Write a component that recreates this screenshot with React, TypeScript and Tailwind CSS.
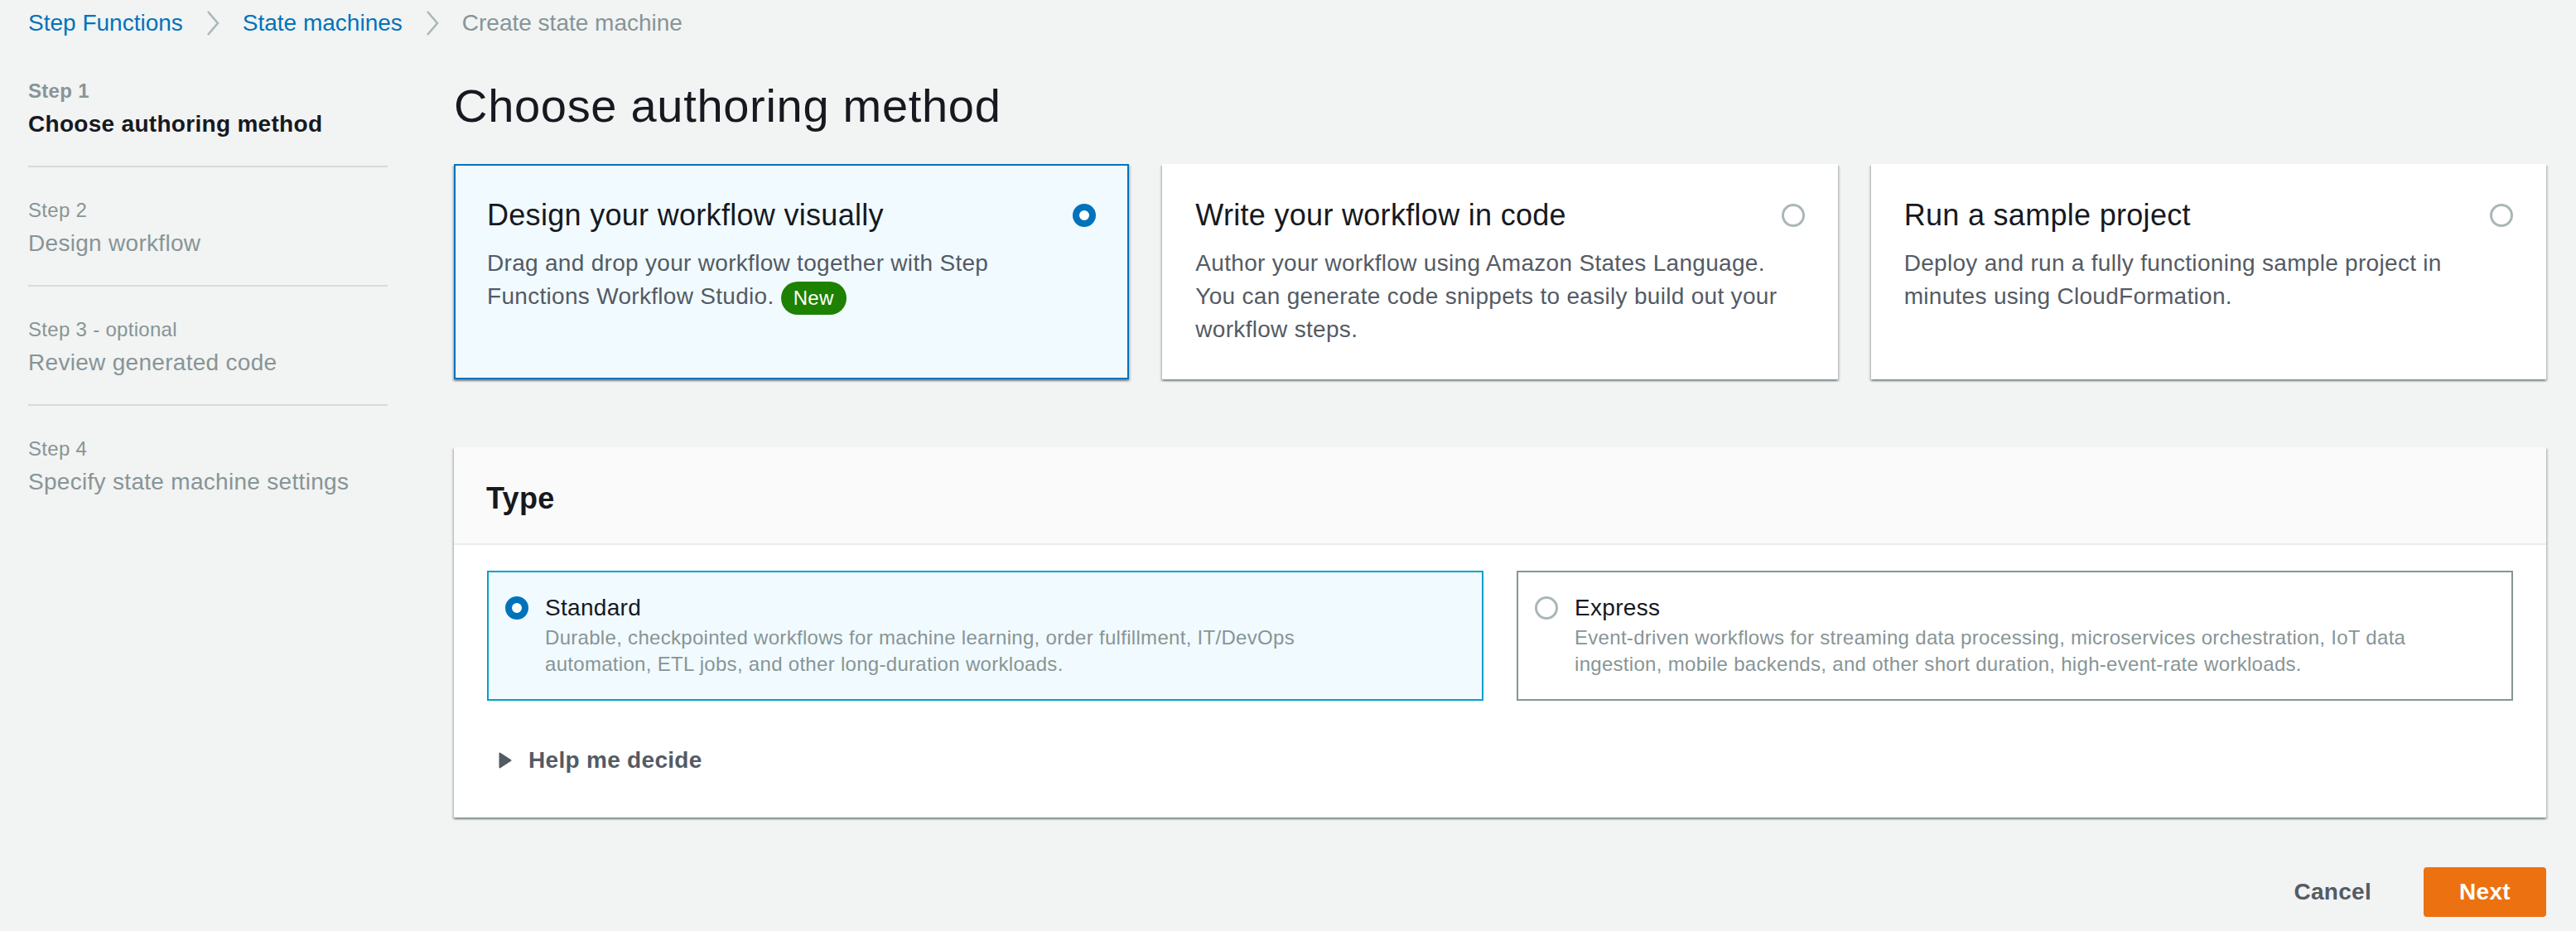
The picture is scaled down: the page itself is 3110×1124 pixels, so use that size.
import { ReactNode } from "react";

const steps = [
  { label: "Step 1", title: "Choose authoring method", active: true },
  { label: "Step 2", title: "Design workflow", active: false },
  { label: "Step 3 - optional", title: "Review generated code", active: false },
  { label: "Step 4", title: "Specify state machine settings", active: false },
];

const cardShadow =
  "shadow-[0_2px_2px_0_rgba(0,28,36,0.3),2px_2px_2px_0_rgba(0,28,36,0.15),-2px_2px_2px_0_rgba(0,28,36,0.15)]";

function Chevron() {
  return (
    <svg width="18" height="32" viewBox="0 0 18 32" className="mx-[27px] shrink-0">
      <polyline points="3,2 15,16 3,30" fill="none" stroke="#aab7b8" strokeWidth="2.5" />
    </svg>
  );
}

function Radio({ checked }: { checked: boolean }) {
  return checked ? (
    <span className="block h-[28px] w-[28px] shrink-0 rounded-full border-[8px] border-[#0073bb] bg-white" />
  ) : (
    <span className="block h-[28px] w-[28px] shrink-0 rounded-full border-[3px] border-[#aab7b8] bg-white" />
  );
}

function MethodCard({
  title,
  checked,
  children,
}: {
  title: string;
  checked: boolean;
  children: ReactNode;
}) {
  return (
    <div
      className={`min-h-[260px] border-2 px-[38px] pt-[38px] pb-[30px] ${cardShadow} ${
        checked ? "border-[#0073bb] bg-[#f1faff]" : "border-transparent bg-white"
      }`}
    >
      <div className="flex h-[44px] items-center justify-between">
        <div className="text-[36px] leading-[44px] text-[#16191f]">{title}</div>
        <Radio checked={checked} />
      </div>
      <div className="mt-[16px] text-[28px] leading-[40px] text-[#545b64]">{children}</div>
    </div>
  );
}

function TypeTile({
  title,
  checked,
  children,
}: {
  title: string;
  checked: boolean;
  children: ReactNode;
}) {
  return (
    <div
      className={`flex items-start gap-[20px] border-2 px-[20px] pt-[23px] pb-[26px] ${
        checked ? "border-[#00a1c9] bg-[#f1faff]" : "border-[#879596] bg-white"
      }`}
    >
      <div className="mt-[6px]">
        <Radio checked={checked} />
      </div>
      <div>
        <div className="text-[28px] leading-[40px] text-[#16191f]">{title}</div>
        <div className="text-[24px] leading-[32px] text-[#879596]">{children}</div>
      </div>
    </div>
  );
}

export default function App() {
  return (
    <div className="min-h-[1124px] w-full bg-[#f2f3f3] pl-[34px] pr-[36px] pt-[8px] font-['Liberation_Sans',Arial,sans-serif] tracking-[0.3px]">
      {/* breadcrumbs */}
      <nav className="flex h-[40px] items-center text-[28px] leading-[40px] tracking-normal">
        <span className="text-[#0073bb]">Step Functions</span>
        <Chevron />
        <span className="text-[#0073bb]">State machines</span>
        <Chevron />
        <span className="text-[#879596]">Create state machine</span>
      </nav>

      <div className="mt-[46px] flex gap-[80px]">
        {/* wizard steps */}
        <aside className="w-[434px] shrink-0">
          {steps.map((s, i) => (
            <div
              key={s.label}
              className={`${i === 0 ? "" : "pt-[36px]"} ${
                i === steps.length - 1 ? "" : "border-b-2 border-[#d5dbdb] pb-[30px]"
              }`}
            >
              <div
                className={`text-[24px] leading-[32px] text-[#879596] ${s.active ? "font-bold" : ""}`}
              >
                {s.label}
              </div>
              <div
                className={`mt-[4px] text-[28px] leading-[40px] ${
                  s.active ? "font-bold text-[#16191f]" : "text-[#879596]"
                }`}
              >
                {s.title}
              </div>
            </div>
          ))}
        </aside>

        <main className="min-w-0 flex-1">
          <h1 className="text-[56px] leading-[68px] font-normal tracking-[0.7px] text-[#16191f]">
            Choose authoring method
          </h1>

          <div className="mt-[36px] grid grid-cols-3 gap-[40px]">
            <MethodCard title="Design your workflow visually" checked>
              Drag and drop your workflow together with Step
              <br />
              Functions Workflow Studio.{" "}
              <span className="inline-block h-[40px] rounded-full bg-[#1d8102] px-[15px] align-middle text-[24px] leading-[40px] text-white">
                New
              </span>
            </MethodCard>
            <MethodCard title="Write your workflow in code" checked={false}>
              Author your workflow using Amazon States Language.
              <br />
              You can generate code snippets to easily build out your
              <br />
              workflow steps.
            </MethodCard>
            <MethodCard title="Run a sample project" checked={false}>
              Deploy and run a fully functioning sample project in
              <br />
              minutes using CloudFormation.
            </MethodCard>
          </div>

          <section className={`mt-[82px] bg-white ${cardShadow}`}>
            <div className="border-b-2 border-[#eaeded] bg-[#fafafa] px-[39px] pt-[40px] pb-[32px]">
              <h2 className="text-[36px] leading-[44px] font-bold text-[#16191f]">Type</h2>
            </div>
            <div className="px-[40px] pt-[31px] pb-[49px]">
              <div className="grid grid-cols-2 gap-[40px]">
                <TypeTile title="Standard" checked>
                  Durable, checkpointed workflows for machine learning, order fulfillment, IT/DevOps
                  <br />
                  automation, ETL jobs, and other long-duration workloads.
                </TypeTile>
                <TypeTile title="Express" checked={false}>
                  Event-driven workflows for streaming data processing, microservices orchestration, IoT data
                  <br />
                  ingestion, mobile backends, and other short duration, high-event-rate workloads.
                </TypeTile>
              </div>
              <div className="mt-[52px] flex h-[40px] items-center">
                <svg width="16" height="20" viewBox="0 0 16 20" className="ml-[14px] mr-[20px]">
                  <path d="M1.5 1.5 L14.5 10 L1.5 18.5 Z" fill="#545b64" stroke="#545b64" strokeWidth="2" strokeLinejoin="round" />
                </svg>
                <span className="text-[28px] leading-[40px] font-bold text-[#545b64]">Help me decide</span>
              </div>
            </div>
          </section>

          <div className="mt-[60px] flex items-center justify-end">
            <button className="mr-[63px] text-[28px] leading-[40px] font-bold text-[#545b64]">Cancel</button>
            <button className="h-[60px] w-[148px] rounded-[4px] bg-[#ec7211] text-[28px] leading-[40px] font-bold text-white">
              Next
            </button>
          </div>
        </main>
      </div>
    </div>
  );
}
